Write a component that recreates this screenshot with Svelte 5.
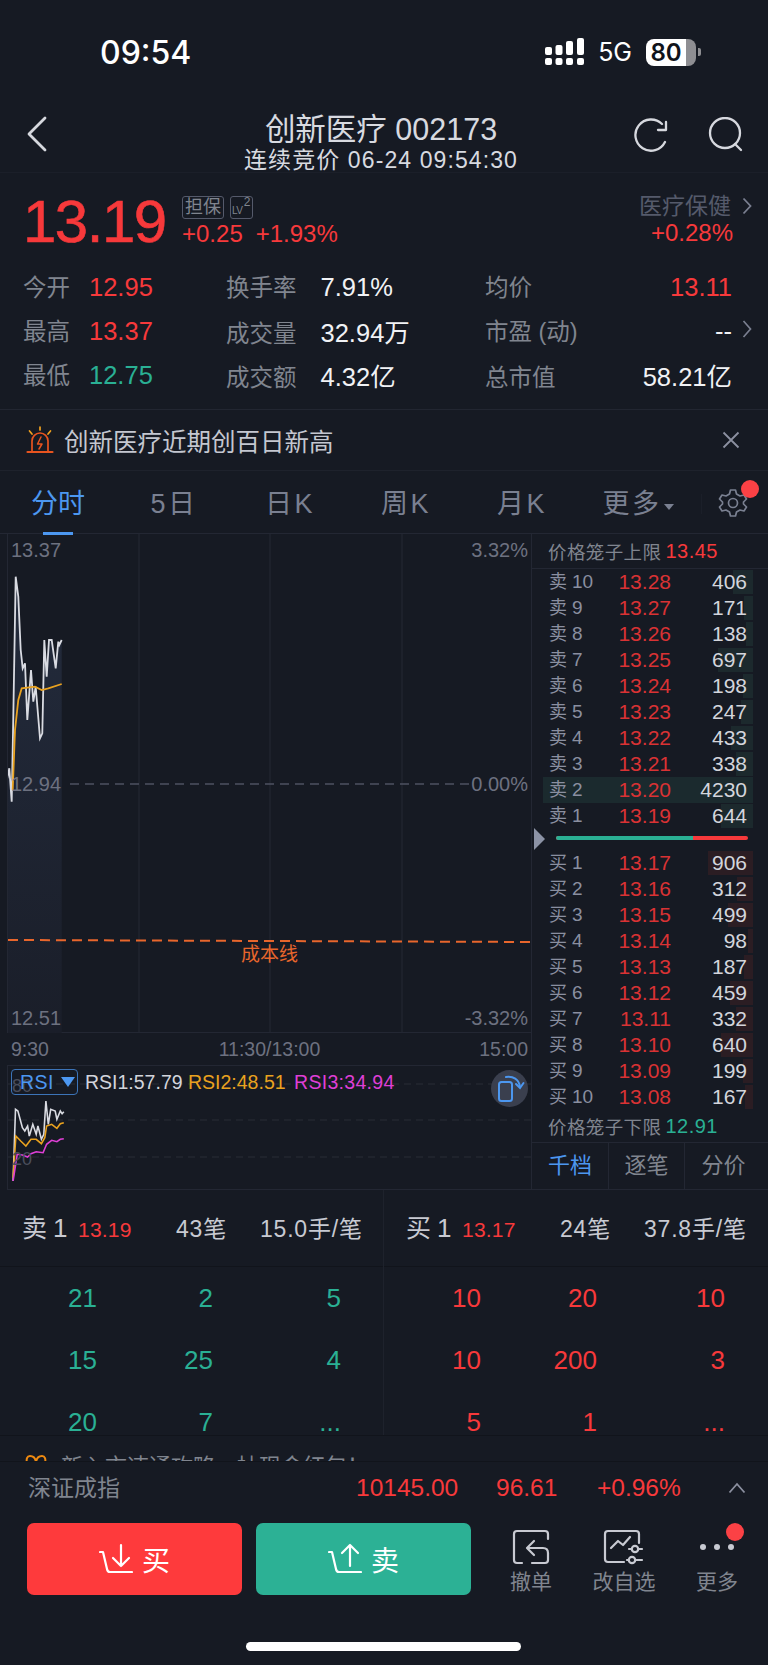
<script>
  const asks = [
    ["卖", 10, "13.28", 406], ["卖", 9, "13.27", 171], ["卖", 8, "13.26", 138], ["卖", 7, "13.25", 697],
    ["卖", 6, "13.24", 198], ["卖", 5, "13.23", 247], ["卖", 4, "13.22", 433], ["卖", 3, "13.21", 338],
    ["卖", 2, "13.20", 4230], ["卖", 1, "13.19", 644]
  ];
  const bids = [
    ["买", 1, "13.17", 906], ["买", 2, "13.16", 312], ["买", 3, "13.15", 499], ["买", 4, "13.14", 98],
    ["买", 5, "13.13", 187], ["买", 6, "13.12", 459], ["买", 7, "13.11", 332], ["买", 8, "13.10", 640],
    ["买", 9, "13.09", 199], ["买", 10, "13.08", 167]
  ];
  const sellTrades = ["21", "2", "5", "15", "25", "4", "20", "7", "..."];
  const buyTrades = ["10", "20", "10", "10", "200", "3", "5", "1", "..."];

  // price line points, measured on the 3x crop
  const toChart = (pts) => pts.map(([x, y]) => [x / 3 - 8, y / 3 - 4]);
  const price = toChart([[22,745],[28,715],[35,815],[40,560],[47,140],[55,200],[62,360],[68,415],[75,400],[82,570],[93,420],[100,515],[107,470],[120,625],[127,610],[133,330],[140,440],[147,330],[155,330],[167,415],[175,335],[178,345],[185,330]]);
  const avg = toChart([[38,780],[45,600],[55,510],[65,475],[105,470],[125,480],[145,475],[185,462]]);
  const str = (pts) => pts.map((p) => p[0].toFixed(1) + "," + p[1].toFixed(1)).join(" ");
  const area = str(price) + " 53.7,499 -0.7,499";

  const toRsi = (pts) => pts.map(([x, y]) => [x / 2.9 - 8, y / 3 - 45]);
  const rsi1 = toRsi([[38,480],[45,265],[52,270],[65,320],[72,330],[80,315],[85,345],[95,310],[105,340],[110,315],[120,355],[127,340],[133,240],[140,310],[147,265],[160,270],[165,295],[175,270],[180,278],[185,272]]);
  const rsi2 = toRsi([[38,470],[46,345],[60,360],[75,375],[90,355],[105,355],[120,368],[130,350],[135,315],[150,310],[165,322],[175,308],[185,305]]);
  const rsi3 = toRsi([[38,480],[50,400],[65,402],[80,408],[90,398],[105,392],[125,395],[135,370],[150,358],[165,362],[175,355],[185,353]]);
</script>

<div class="page">
  <div class="status">
    <span class="time">09:54</span>
    <div class="status-right">
      <svg width="40" height="28" viewBox="0 0 40 28">
        <g fill="#fff">
          <rect x="0" y="20" width="7" height="7" rx="2" />
          <rect x="10.500" y="20" width="7" height="7" rx="2" />
          <rect x="21" y="20" width="7" height="7" rx="2" />
          <rect x="32" y="20" width="7" height="7" rx="2" />
          <rect x="0" y="9" width="7" height="8" rx="2" />
          <rect x="10.500" y="7" width="7" height="10" rx="2" />
          <rect x="21" y="3" width="7" height="14" rx="2" />
          <rect x="32" y="0" width="7" height="17" rx="2" />
        </g>
      </svg>
      <span class="net">5G</span>
      <div class="battery"><span>80</span></div>
      <i class="battery-tip"></i>
    </div>
  </div>

  <div class="nav">
    <svg class="back" width="24" height="36" viewBox="0 0 24 36">
      <path d="M20 2 L4 18 L20 34" fill="none" stroke="#d6d8de" stroke-width="2.800" stroke-linecap="round" stroke-linejoin="round" />
    </svg>
    <div class="nav-title">
      <div class="title">创新医疗 002173</div>
      <div class="subtitle">连续竞价 06-24 09:54:30</div>
    </div>
    <div class="nav-icons">
      <svg width="36" height="36" viewBox="0 0 36 36" fill="none" stroke="#d6d8de" stroke-width="2.300" stroke-linecap="round" stroke-linejoin="round">
        <path d="M32 25 A15.600 15.600 0 1 1 29 7" />
        <path d="M33 5 V13 H25" />
      </svg>
      <svg width="36" height="36" viewBox="0 0 36 36" fill="none" stroke="#d6d8de" stroke-width="2.300" stroke-linecap="round">
        <circle cx="18" cy="16" r="15" />
        <path d="M28 27 L34 33" />
      </svg>
    </div>
  </div>

  <div class="quote">
    <div class="big-price">13.19</div>
    <div class="quote-mid">
      <div class="tags">
        <span class="tag">担保</span>
        <span class="tag lv">LV<sup>2</sup></span>
      </div>
      <div class="changes"><span>+0.25</span><span>+1.93%</span></div>
    </div>
    <div class="quote-right">
      <div class="sector">医疗保健
        <svg width="10" height="18" viewBox="0 0 10 18"><path d="M1.500 1.500 L8.500 9 L1.500 16.500" fill="none" stroke="#7a7f90" stroke-width="1.800" /></svg>
      </div>
      <div class="sector-change">+0.28%</div>
    </div>
  </div>

  <div class="stats">
    <div class="stat-row">
      <div class="c1"><span class="lb">今开</span><span class="val red">12.95</span></div>
      <div class="c2"><span class="lb">换手率</span><span class="val wh">7.91%</span></div>
      <div class="c3"><span class="lb">均价</span><span class="val red">13.11</span></div>
    </div>
    <div class="stat-row">
      <div class="c1"><span class="lb">最高</span><span class="val red">13.37</span></div>
      <div class="c2"><span class="lb">成交量</span><span class="val wh">32.94万</span></div>
      <div class="c3"><span class="lb">市盈 (动)</span><span class="val wh">--</span>
        <svg class="more" width="10" height="20" viewBox="0 0 10 20"><path d="M1.500 2 L8.500 10 L1.500 18" fill="none" stroke="#7a7f90" stroke-width="1.700" /></svg>
      </div>
    </div>
    <div class="stat-row">
      <div class="c1"><span class="lb">最低</span><span class="val green">12.75</span></div>
      <div class="c2"><span class="lb">成交额</span><span class="val wh">4.32亿</span></div>
      <div class="c3"><span class="lb">总市值</span><span class="val wh">58.21亿</span></div>
    </div>
  </div>

  <div class="alert">
    <svg width="28" height="28" viewBox="0 0 28 28" fill="none" stroke="#e8541f" stroke-width="1.700" stroke-linecap="round">
      <path d="M1.500 26 H26.500" stroke-width="2.200" />
      <path d="M6 25 V15 A8 8 0 0 1 22 15 V25" />
      <path d="M15 11 L11.500 18 H16 L13 23" stroke-width="1.500" stroke-linejoin="round" />
      <path d="M14 1 V4 M3.500 5 L6 8 M24.500 5 L22 8" stroke="#f0a11e" />
    </svg>
    <span>创新医疗近期创百日新高</span>
    <svg class="close" width="18" height="18" viewBox="0 0 18 18"><path d="M1.500 1.500 L16.500 16.500 M16.500 1.500 L1.500 16.500" stroke="#8c90a0" stroke-width="1.800" /></svg>
  </div>

  <div class="tabs">
    <div class="tab active">分时</div>
    <div class="tab">5日</div>
    <div class="tab">日K</div>
    <div class="tab">周K</div>
    <div class="tab">月K</div>
    <div class="tab">更多<i class="caret"></i></div>
    <div class="gear">
      <svg width="30" height="30" viewBox="0 0 30 30" fill="none" stroke="#7a8091" stroke-width="1.700" stroke-linejoin="round">
        <path d="M12.500 2 H17.500 L18.500 6 L22 8 L26 7 L28.500 11 L25.500 14 V16 L28.500 19 L26 23 L22 22 L18.500 24 L17.500 28 H12.500 L11.500 24 L8 22 L4 23 L1.500 19 L4.500 16 V14 L1.500 11 L4 7 L8 8 L11.500 6 Z" />
        <circle cx="15" cy="15" r="4.500" />
      </svg>
      <i class="dot"></i>
    </div>
  </div>

  <div class="main">
    <div class="charts">
      <div class="chart">
        <svg width="524" height="499" viewBox="0 0 524 499">
          <defs>
            <linearGradient id="fill" x1="0" y1="0" x2="0" y2="1">
              <stop offset="0" stop-color="#232b3c" />
              <stop offset="1" stop-color="#1a1e29" />
            </linearGradient>
          </defs>
          <polygon points={area} fill="url(#fill)" />
          <path d="M131 0 V499 M262 0 V499 M394 0 V499" stroke="#242834" />
          <path d="M62 250 H524" stroke="#4e5261" stroke-width="1.500" stroke-dasharray="9 6" />
          <path d="M0 406 L524 408" stroke="#e8662c" stroke-width="2" stroke-dasharray="10 6" />
          <polyline points={str(price)} fill="none" stroke="#d9dbe2" stroke-width="1.800" />
          <polyline points={str(avg)} fill="none" stroke="#e9a21f" stroke-width="1.800" />
        </svg>
        <span class="axis a-tl">13.37</span>
        <span class="axis a-tr">3.32%</span>
        <span class="axis a-ml">12.94</span>
        <span class="axis a-mr">0.00%</span>
        <span class="axis a-bl">12.51</span>
        <span class="axis a-br">-3.32%</span>
        <span class="cost">成本线</span>
      </div>

      <div class="times"><span>9:30</span><span>11:30/13:00</span><span>15:00</span></div>

      <div class="rsi">
        <svg width="524" height="125" viewBox="0 0 524 125">
          <path d="M0 18 H524 M0 54 H524 M0 91 H524" stroke="#282c37" stroke-dasharray="7 5" />
          <polyline points={str(rsi1)} fill="none" stroke="#d9dbe2" stroke-width="1.600" />
          <polyline points={str(rsi2)} fill="none" stroke="#e9a21f" stroke-width="1.600" />
          <polyline points={str(rsi3)} fill="none" stroke="#df3fd6" stroke-width="1.600" />
        </svg>
        <span class="rsi-axis r80">80</span>
        <span class="rsi-axis r20">20</span>
        <div class="rsi-head">
          <div class="rsi-pick">RSI<i></i></div>
          <span class="r1">RSI1:57.79</span>
          <span class="r2">RSI2:48.51</span>
          <span class="r3">RSI3:34.94</span>
        </div>
        <div class="rotate">
          <svg width="30" height="30" viewBox="0 0 30 30" fill="none" stroke="#4c97f0" stroke-width="2">
            <rect x="4" y="8" width="13" height="19" rx="2.500" />
            <path d="M11 3 C18 2 24 5 25 13" stroke-linecap="round" />
            <path d="M21 10 L25 14 L28.500 9" stroke-linecap="round" />
          </svg>
        </div>
      </div>
    </div>

    <div class="book">
      <div class="limit"><span>价格笼子上限</span> <b class="red">13.45</b></div>
      <div class="levels">
        {#each asks as [side, n, p, q]}
          <div class="level" class:hl={n === 2}>
            <i class="bar ask" style="width: {q * 0.05}px"></i>
            <span class="lv-name">{side}<em>{n}</em></span>
            <span class="lv-price">{p}</span>
            <span class="lv-qty">{q}</span>
          </div>
        {/each}
      </div>
      <div class="ratio">
        <i class="tri"></i>
        <div class="ratio-bar"><i></i></div>
      </div>
      <div class="levels">
        {#each bids as [side, n, p, q]}
          <div class="level">
            <i class="bar bid" style="width: {q * 0.05}px"></i>
            <span class="lv-name">{side}<em>{n}</em></span>
            <span class="lv-price">{p}</span>
            <span class="lv-qty">{q}</span>
          </div>
        {/each}
      </div>
      <div class="limit low"><span>价格笼子下限</span> <b class="green">12.91</b></div>
      <div class="book-tabs">
        <div class="on">千档</div>
        <div>逐笔</div>
        <div>分价</div>
      </div>
    </div>
  </div>

  <div class="trades">
    <div class="side">
      <div class="side-head">
        <span class="first">卖<em>1</em></span><span class="red p">13.19</span>
        <span class="n">43笔</span><span class="per">15.0手/笔</span>
      </div>
      <div class="cells green">
        {#each sellTrades as t}<span>{t}</span>{/each}
      </div>
    </div>
    <div class="side right">
      <div class="side-head">
        <span class="first">买<em>1</em></span><span class="red p">13.17</span>
        <span class="n">24笔</span><span class="per">37.8手/笔</span>
      </div>
      <div class="cells red">
        {#each buyTrades as t}<span>{t}</span>{/each}
      </div>
    </div>
  </div>

  <div class="promo">
    <svg width="24" height="24" viewBox="0 0 24 24" fill="none" stroke="#ef8a10" stroke-width="2">
      <path d="M1 9 H23 M12 9 C12 3 9 1 6 1 C3 1 2 4 3 9 M12 9 C12 3 15 1 18 1 C21 1 22 4 21 9 M3 9 V22 H21 V9" />
    </svg>
    <span>新入市速通攻略，抽现金红包！</span>
  </div>

  <div class="index">
    <span class="idx-name">深证成指</span>
    <span class="red i1">10145.00</span>
    <span class="red i2">96.61</span>
    <span class="red i3">+0.96%</span>
    <svg width="18" height="12" viewBox="0 0 18 12"><path d="M1.500 10.500 L9 2 L16.500 10.500" fill="none" stroke="#8c90a0" stroke-width="1.800" /></svg>
  </div>

  <div class="actions">
    <div class="trade-btn buy">
      <svg width="34" height="32" viewBox="0 0 34 32" fill="none" stroke="#fff" stroke-width="2.200" stroke-linecap="round" stroke-linejoin="round">
        <path d="M1 9 H4 L8 26 Q8.500 29 11 29 H33" />
        <path d="M22 2 V23 M14 15 L22 23 L30 15" />
      </svg>
      <span>买</span>
    </div>
    <div class="trade-btn sell">
      <svg width="34" height="32" viewBox="0 0 34 32" fill="none" stroke="#fff" stroke-width="2.200" stroke-linecap="round" stroke-linejoin="round">
        <path d="M1 9 H4 L8 26 Q8.500 29 11 29 H33" />
        <path d="M22 23 V2 M14 10 L22 2 L30 10" />
      </svg>
      <span>卖</span>
    </div>
    <div class="act a-undo">
      <svg width="38" height="36" viewBox="0 0 38 36" fill="none" stroke="#c8cad2" stroke-width="2.200" stroke-linecap="round" stroke-linejoin="round">
        <path d="M10 34 H5 Q2 34 2 31 V5 Q2 2 5 2 H33 Q36 2 36 5 V10" />
        <path d="M36 24 V31 Q36 34 33 34 H20" />
        <path d="M36 24 Q36 19 31 19 H16 M22 12 L15 19 L22 26" />
      </svg>
      <span>撤单</span>
    </div>
    <div class="act a-watch">
      <svg width="42" height="36" viewBox="0 0 42 36" fill="none" stroke="#c8cad2" stroke-width="2.200" stroke-linecap="round" stroke-linejoin="round">
        <path d="M21 33 H5 Q2 33 2 30 V5 Q2 2 5 2 H33 Q36 2 36 5 V14" />
        <path d="M8 19 L15 12 L20 16 L27 8" />
        <path d="M26 20 H39 M24 31 H39" />
        <circle cx="32" cy="20" r="3.200" fill="#161a23" />
        <circle cx="29" cy="31" r="3.200" fill="#161a23" />
      </svg>
      <span>改自选</span>
    </div>
    <div class="act a-more">
      <div class="dots"><i></i><i></i><i></i></div>
      <i class="dot"></i>
      <span>更多</span>
    </div>
  </div>

  <div class="home"><i></i></div>
</div>

<style>
  :global(body) {
    margin: 0;
    background: #161a23;
  }

  .page {
    width: 768px;
    height: 1665px;
    overflow: hidden;
    background: #161a23;
    font-family: "Liberation Sans", "Noto Sans CJK SC", sans-serif;
    color: #c8cad2;
  }

  i, em, b {
    font-style: normal;
    font-weight: normal;
  }

  .red { color: #f7393b; }
  .green { color: #2ab094; }
  .wh { color: #f1f2f5; }

  /* status bar */
  .status {
    height: 100px;
    box-sizing: border-box;
    padding: 36px 67px 32px 100px;
    display: flex;
    justify-content: space-between;
    align-items: center;
    color: #fff;
  }

  .time {
    font-family: Inter, sans-serif;
    font-size: 32px;
    font-weight: 500;
  }

  .status-right {
    display: flex;
    align-items: center;
  }

  .net {
    font-family: Inter, sans-serif;
    font-size: 25px;
    margin-left: 13px;
  }

  .battery {
    width: 50px;
    height: 27px;
    margin-left: 14px;
    border-radius: 8px;
    background: linear-gradient(90deg, #fff 80%, #8e8e92 80%);
    color: #10131a;
    font-family: Inter, sans-serif;
    font-size: 24px;
    font-weight: 600;
    line-height: 27px;
    text-align: center;
    padding-right: 10px;
    box-sizing: border-box;
  }

  .battery-tip {
    width: 3px;
    height: 8px;
    margin-left: 2px;
    border-radius: 0 2px 2px 0;
    background: #8e8e92;
  }

  /* nav */
  .nav {
    height: 72px;
    display: grid;
    grid-template-columns: 150px 1fr 156px;
  }

  .back {
    margin: 16px 0 0 25px;
  }

  .nav-title {
    padding-top: 12px;
    text-align: center;
    color: #d8dae0;
    white-space: nowrap;
  }

  .title {
    font-size: 30.500px;
    line-height: 34px;
  }

  .subtitle {
    font-size: 23px;
    line-height: 26px;
    letter-spacing: 1.100px;
    margin-top: 1px;
  }

  .nav-icons {
    display: flex;
    justify-content: flex-end;
    gap: 38px;
    padding: 17px 25px 0 0;
  }

  /* quote */
  .quote {
    height: 92px;
    box-sizing: border-box;
    padding: 20px 16px 0 23px;
    display: flex;
    border-top: 1px solid #1b1f29;
  }

  .big-price {
    width: 159px;
    font-size: 60px;
    line-height: 58px;
    letter-spacing: -1.500px;
    color: #f7393b;
    -webkit-text-stroke: 0.600px #f7393b;
  }

  .quote-mid {
    display: flex;
    flex-direction: column;
  }

  .tags {
    display: flex;
    gap: 6px;
    margin-top: 3px;
  }

  .tag {
    height: 23px;
    box-sizing: border-box;
    padding: 0 2px;
    border: 1px solid #555a6b;
    border-radius: 3px;
    font-size: 18px;
    line-height: 21px;
    color: #80858f;
  }

  .tag.lv {
    width: 23px;
    padding: 0 1px;
    font-size: 10px;
    line-height: 28px;
    letter-spacing: -0.500px;
    position: relative;
  }

  .tag.lv sup {
    position: absolute;
    right: 2px;
    top: -9px;
    font-size: 12px;
  }

  .changes {
    display: flex;
    gap: 13px;
    margin-top: 2px;
    font-size: 24px;
    line-height: 26px;
    color: #f7393b;
  }

  .quote-right {
    margin-left: auto;
    text-align: right;
  }

  .sector {
    font-size: 23px;
    line-height: 26px;
    margin-top: 0;
    color: #555a6b;
    display: flex;
    align-items: center;
    gap: 11px;
  }

  .sector-change {
    font-size: 24px;
    line-height: 26px;
    margin-top: 1px;
    padding-right: 19px;
    color: #f7393b;
  }

  /* stats */
  .stats {
    height: 146px;
    box-sizing: border-box;
    border-bottom: 1px solid #222631;
  }

  .stat-row {
    height: 44px;
    padding-left: 23px;
    display: flex;
    align-items: center;
    font-size: 23.500px;
  }

  .lb {
    color: #80858f;
  }

  .val {
    font-size: 25.500px;
  }

  .c1 {
    width: 203px;
    display: flex;
    align-items: baseline;
    gap: 19px;
  }

  .c2 {
    width: 259px;
    display: flex;
    align-items: baseline;
    gap: 24px;
  }

  .c3 {
    width: 247px;
    display: flex;
    align-items: baseline;
    justify-content: space-between;
    position: relative;
  }

  .more {
    position: absolute;
    right: -20px;
    top: 6px;
  }

  /* alert */
  .alert {
    height: 61px;
    box-sizing: border-box;
    padding: 0 28px 0 26px;
    display: flex;
    align-items: center;
    gap: 10px;
    font-size: 24.500px;
    color: #c4c7d0;
    border-bottom: 1px solid #1e222c;
  }

  .close {
    margin-left: auto;
  }

  /* tabs */
  .tabs {
    height: 63px;
    box-sizing: border-box;
    display: grid;
    grid-template-columns: repeat(6, 116px) 1fr;
    align-items: center;
    font-size: 27px;
    color: #7a8091;
    border-bottom: 1px solid #232733;
    padding-bottom: 2px;
  }

  .tab {
    text-align: center;
    position: relative;
    height: 61px;
    line-height: 66px;
    letter-spacing: 2.500px;
  }

  .tab.active {
    color: #4c97f0;
    letter-spacing: 0;
  }

  .tab.active::after {
    content: "";
    position: absolute;
    left: 43px;
    bottom: -3px;
    width: 30px;
    height: 3px;
    background: #4c97f0;
  }

  .caret {
    display: inline-block;
    margin-left: 2px;
    vertical-align: 3px;
    border: 5px solid transparent;
    border-top: 6px solid #7a8091;
    border-bottom: 0;
  }

  .gear {
    position: relative;
    padding: 2px 0 0 22px;
    display: flex;
  }

  .gear::before {
    content: "";
    position: absolute;
    left: 5px;
    top: 8px;
    height: 20px;
    border-left: 1px solid #1b1f29;
  }

  .dot {
    position: absolute;
    width: 18px;
    height: 18px;
    border-radius: 50%;
    background: #fb4145;
  }

  .gear .dot {
    left: 45px;
    top: -6px;
  }

  /* charts */
  .main {
    display: flex;
    height: 656px;
  }

  .charts {
    width: 532px;
    box-sizing: border-box;
    padding-left: 8px;
    border-right: 1px solid #232733;
  }

  .chart {
    height: 499px;
    position: relative;
    border-left: 1px solid #232733;
    border-bottom: 1px solid #232733;
    box-sizing: border-box;
    margin-left: -1px;
  }

  .chart svg, .rsi svg {
    display: block;
  }

  .axis {
    position: absolute;
    font-size: 20px;
    line-height: 22px;
    color: #6d7180;
  }

  .a-tl { left: 3px; top: 5px; }
  .a-tr { right: 3px; top: 5px; }
  .a-ml { left: 3px; top: 239px; }
  .a-mr { right: 0; top: 239px; padding: 0 3px 0 2px; background: #161a23; }
  .a-bl { left: 3px; top: 473px; }
  .a-br { right: 3px; top: 473px; }

  .cost {
    position: absolute;
    left: 233px;
    top: 409px;
    font-size: 19px;
    line-height: 24px;
    color: #e8662c;
  }

  .times {
    height: 32px;
    display: grid;
    grid-template-columns: 1fr auto 1fr;
    align-items: center;
    padding: 0 3px;
    font-size: 19.500px;
    color: #6d7180;
  }

  .times span:last-child {
    text-align: right;
  }

  .rsi {
    height: 125px;
    position: relative;
    box-sizing: border-box;
    border-top: 1px solid #232733;
    border-left: 1px solid #232733;
    border-bottom: 1px solid #232733;
    margin-left: -1px;
  }

  .rsi-axis {
    position: absolute;
    left: 4px;
    font-size: 18px;
    line-height: 20px;
    color: #4a4e5c;
  }

  .r80 { top: 10px; }
  .r20 { top: 83px; }

  .rsi-head {
    position: absolute;
    left: 3px;
    top: 3px;
    display: flex;
    align-items: center;
    font-size: 19.500px;
  }

  .rsi-pick {
    width: 67px;
    height: 26px;
    box-sizing: border-box;
    border: 1px solid #3c74b8;
    border-radius: 4px;
    margin-right: 7px;
    padding-left: 8px;
    color: #4c97f0;
    line-height: 24px;
    letter-spacing: 0.500px;
    display: flex;
    align-items: center;
    gap: 7px;
  }

  .rsi-pick i {
    border: 7px solid transparent;
    border-top: 10px solid #4c97f0;
    border-bottom: 0;
  }

  .r1 { color: #d3d5dc; width: 103px; }
  .r2 { color: #e9a21f; width: 106px; }
  .r3 { color: #df3fd6; letter-spacing: 0.300px; }

  .rotate {
    position: absolute;
    left: 483px;
    top: 4px;
    width: 37px;
    height: 37px;
    border-radius: 50%;
    background: #3a3f4e;
    display: flex;
    align-items: center;
    justify-content: center;
  }

  /* order book */
  .book {
    width: 236px;
    font-size: 20px;
  }

  .limit {
    height: 35px;
    box-sizing: border-box;
    padding-left: 16px;
    display: flex;
    align-items: center;
    gap: 4px;
    font-size: 18.500px;
    color: #80858f;
    border-bottom: 1px solid #232733;
    letter-spacing: 0.400px;
  }

  .limit b {
    font-size: 20px;
    letter-spacing: 0.500px;
  }

  .limit.low {
    height: 33px;
    border-top: 0;
  }

  .level {
    height: 26px;
    position: relative;
    display: grid;
    grid-template-columns: 54px 68px 76px;
    padding-left: 17px;
    align-items: center;
    line-height: 26px;
  }

  .level.hl {
    background: #1b2a2e;
    margin-left: 11px;
    padding-left: 6px;
    margin-right: 15px;
  }

  .bar {
    position: absolute;
    right: 15px;
    top: 1px;
    bottom: 1px;
  }

  .level.hl .bar {
    display: none;
  }

  .bar.ask { background: #1c292d; }
  .bar.bid { background: #2b1d23; }

  .lv-name {
    position: relative;
    color: #8a8fa0;
    font-size: 18px;
    white-space: nowrap;
  }

  .lv-name em {
    font-size: 19px;
    margin-left: 5px;
  }

  .lv-price {
    position: relative;
    text-align: right;
    color: #d93234;
    font-size: 21px;
  }

  .lv-qty {
    position: relative;
    text-align: right;
    color: #d3d5dc;
    font-size: 21px;
  }

  .ratio {
    height: 21px;
    position: relative;
  }

  .tri {
    position: absolute;
    left: 2px;
    top: -1px;
    border-left: 11px solid #8c93a6;
    border-top: 11px solid transparent;
    border-bottom: 11px solid transparent;
  }

  .ratio-bar {
    position: absolute;
    left: 24px;
    top: 7px;
    width: 192px;
    height: 4px;
    border-radius: 2px;
    background: #f7393b;
    overflow: hidden;
  }

  .ratio-bar i {
    display: block;
    width: 137px;
    height: 4px;
    background: #2ab094;
  }

  .book-tabs {
    height: 47px;
    display: grid;
    grid-template-columns: 76px 76px 1fr;
    font-size: 22px;
    line-height: 46px;
    text-align: center;
    color: #80858f;
    border-bottom: 1px solid #232733;
    box-sizing: border-box;
  }

  .book-tabs div + div {
    border-left: 1px solid #232733;
  }

  .book-tabs div:last-child {
    padding-right: 6px;
  }

  .book-tabs .on {
    color: #4c97f0;
  }

  /* trades */
  .trades {
    height: 246px;
    display: flex;
    overflow: hidden;
    border-bottom: 1px solid #11141b;
    box-sizing: border-box;
  }

  .side {
    width: 384px;
    border-right: 1px solid #1e222c;
    box-sizing: border-box;
  }

  .side.right {
    border-right: 0;
  }

  .side-head {
    height: 77px;
    box-sizing: border-box;
    border-bottom: 1px solid #11141b;
    padding-left: 22px;
    display: flex;
    align-items: baseline;
    line-height: 76px;
    font-size: 23px;
    color: #c8cad2;
  }

  .first {
    font-size: 25px;
    width: 56px;
  }

  .first em {
    margin-left: 6px;
    font-size: 26px;
  }

  .p {
    font-size: 21px;
    width: 98px;
    letter-spacing: 0.200px;
  }

  .n {
    width: 84px;
    letter-spacing: 0.800px;
  }

  .per {
    letter-spacing: 0.800px;
    white-space: nowrap;
  }

  .cells {
    display: grid;
    grid-template-columns: 97px 116px 128px;
    grid-auto-rows: 62px;
    font-size: 26px;
    line-height: 62px;
    text-align: right;
  }

  .promo {
    height: 26px;
    overflow: hidden;
    box-sizing: border-box;
    padding: 19px 0 0 24px;
    display: flex;
    gap: 13px;
    font-size: 22px;
    line-height: 24px;
    color: #80858f;
    border-bottom: 1px solid #11141b;
  }

  .promo svg {
    flex: none;
  }

  .index {
    height: 52px;
    display: flex;
    align-items: baseline;
    line-height: 52px;
    font-size: 24.500px;
  }

  .idx-name {
    margin-left: 28px;
    width: 328px;
    font-size: 23px;
    color: #80858f;
  }

  .i1 { width: 140px; }
  .i2 { width: 101px; }
  .i3 { width: 131px; }

  .index svg {
    align-self: center;
  }

  .actions {
    height: 86px;
    box-sizing: border-box;
    padding: 9px 0 0 27px;
    display: flex;
  }

  .trade-btn {
    width: 215px;
    height: 72px;
    border-radius: 7px;
    display: flex;
    align-items: center;
    justify-content: center;
    gap: 9px;
    color: #fff;
    font-size: 28px;
  }

  .trade-btn.buy {
    background: #fe3a3c;
    margin-right: 14px;
  }

  .trade-btn.sell {
    background: #2cb195;
  }

  .act {
    display: flex;
    flex-direction: column;
    align-items: center;
    font-size: 21px;
    line-height: 24px;
    color: #80858f;
    position: relative;
    white-space: nowrap;
  }

  .act svg {
    margin: 6px 0 5px;
  }

  .a-undo { margin-left: 26px; width: 68px; }
  .a-watch { margin-left: 17px; width: 84px; }
  .a-more { margin-left: 17px; width: 68px; }

  .dots {
    display: flex;
    gap: 8px;
    height: 47px;
    align-items: center;
  }

  .dots i {
    width: 6px;
    height: 6px;
    border-radius: 50%;
    background: #c8cad2;
  }

  .a-more .dot {
    right: 7px;
    top: 0;
  }

  .home {
    height: 65px;
    display: flex;
    justify-content: center;
    align-items: flex-start;
    padding-top: 42px;
    box-sizing: border-box;
  }

  .home i {
    width: 275px;
    height: 9px;
    border-radius: 5px;
    background: #fff;
    margin-left: -1px;
  }
</style>
